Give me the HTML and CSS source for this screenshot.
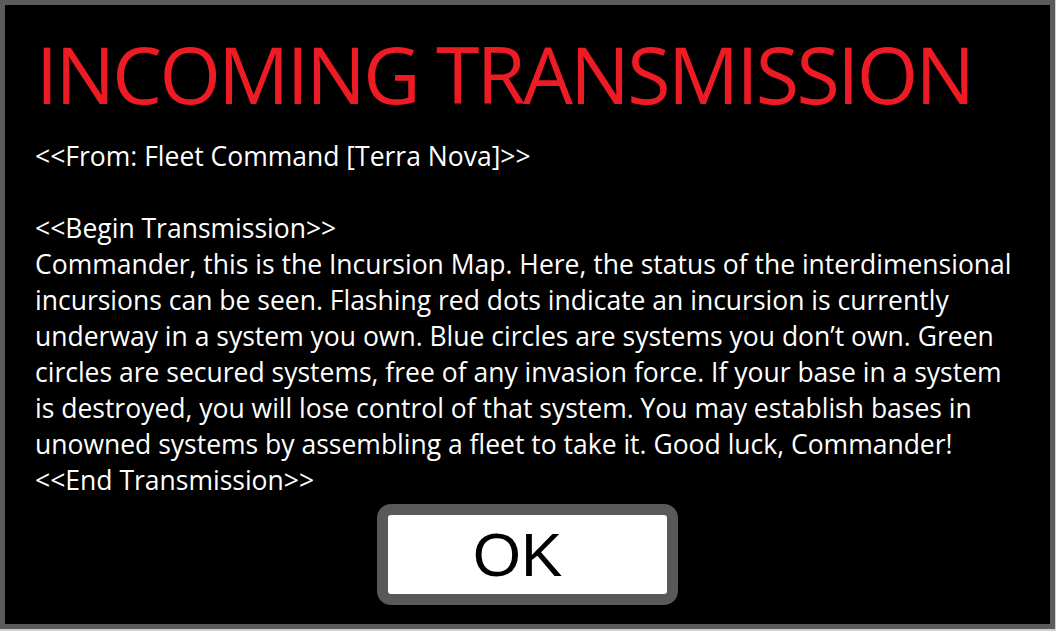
FILE: index.html
```html
<!DOCTYPE html>
<html>
<head>
<meta charset="utf-8">
<link rel="stylesheet" href="styles.css">
</head>
<body>
<div class="frame">
  <h1 class="title">INCOMING TRANSMISSION</h1>
  <div class="message">
    <div class="line">&lt;&lt;From: Fleet Command [Terra Nova]&gt;&gt;</div>
    <div class="line blank">&nbsp;</div>
    <div class="line">&lt;&lt;Begin Transmission&gt;&gt;</div>
    <div class="line">Commander, this is the Incursion Map. Here, the status of the interdimensional</div>
    <div class="line">incursions can be seen. Flashing red dots indicate an incursion is currently</div>
    <div class="line">underway in a system you own. Blue circles are systems you don’t own. Green</div>
    <div class="line">circles are secured systems, free of any invasion force. If your base in a system</div>
    <div class="line">is destroyed, you will lose control of that system. You may establish bases in</div>
    <div class="line">unowned systems by assembling a fleet to take it. Good luck, Commander!</div>
    <div class="line">&lt;&lt;End Transmission&gt;&gt;</div>
  </div>
  <div class="actions">
    <button class="ok">OK</button>
  </div>
</div>
</body>
</html>
```

FILE: styles.css
```css
html, body {
  margin: 0;
  padding: 0;
}
body {
  width: 1056px;
  height: 631px;
  background: #d0d0d0;
  overflow: hidden;
}
.frame {
  box-sizing: border-box;
  width: 1055px;
  height: 629px;
  background: #000;
  border: 5px solid #5a5b5d;
  padding: 0 0 0 30px;
  display: flex;
  flex-direction: column;
  font-family: "Open Sans", sans-serif;
  color: #fff;
}
.title {
  margin: 19px 0 0 1px;
  font-family: "Open Sans", sans-serif;
  font-weight: 400;
  font-size: 79px;
  letter-spacing: -2.6px;
  line-height: 100px;
  color: #ed1c24;
  white-space: nowrap;
}
.message {
  margin-top: 14px;
  font-size: 26.5px;
  line-height: 36px;
  white-space: nowrap;
}
.actions {
  display: flex;
  padding-left: 342px;
  margin-top: 6px;
}
.ok {
  box-sizing: border-box;
  width: 301px;
  height: 101px;
  background: #fff;
  border: 11px solid #58595b;
  border-radius: 14px;
  font-family: "Liberation Sans", Arial, sans-serif;
  font-size: 62px;
  color: #000;
  padding: 0 20px 0 0;
  line-height: 1;
}
```
